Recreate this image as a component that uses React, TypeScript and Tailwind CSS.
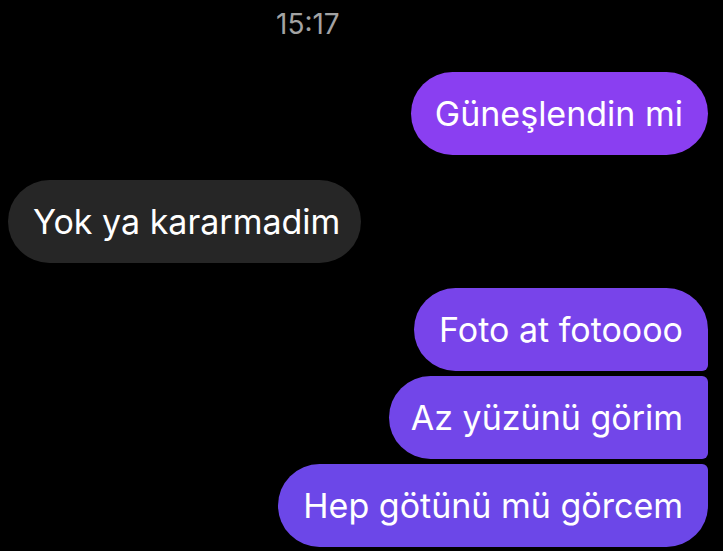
export default function App() {
  return (
    <div
      className="flex h-[551px] w-[723px] flex-col overflow-hidden bg-black"
      style={{ fontFamily: "Inter, 'Noto Sans', sans-serif" }}
    >
      <div className="mt-[9px] flex h-[30px] items-center pl-[276px] text-[28px] text-[#a3a3a3]">
        15:17
      </div>

      <div className="mt-[33px] flex justify-end pr-[15px]">
        <div className="flex h-[83px] items-center rounded-full bg-[#8a3ff1] pl-[24px] pr-[25px] text-[34px] text-white">
          Güneşlendin mi
        </div>
      </div>

      <div className="mt-[25px] flex justify-start pl-[8px]">
        <div className="flex h-[83px] items-center rounded-full bg-[#262626] pl-[25px] pr-[21px] text-[34px] text-white">
          Yok ya kararmadim
        </div>
      </div>

      <div className="mt-[25px] flex flex-col items-end gap-[5px] pr-[15px]">
        <div className="flex h-[83px] items-center rounded-l-[42px] rounded-tr-[42px] rounded-br-[6px] bg-[#7844ea] px-[25px] text-[34px] text-white">
          Foto at fotoooo
        </div>
        <div className="flex h-[83px] items-center rounded-l-[42px] rounded-r-[6px] bg-[#7246e9] pl-[22px] pr-[25px] text-[34px] text-white">
          Az yüzünü görim
        </div>
        <div className="flex h-[83px] items-center rounded-l-[42px] rounded-tr-[6px] rounded-br-[42px] bg-[#6c47e8] px-[25px] text-[34px] text-white">
          Hep götünü mü görcem
        </div>
      </div>
    </div>
  );
}
